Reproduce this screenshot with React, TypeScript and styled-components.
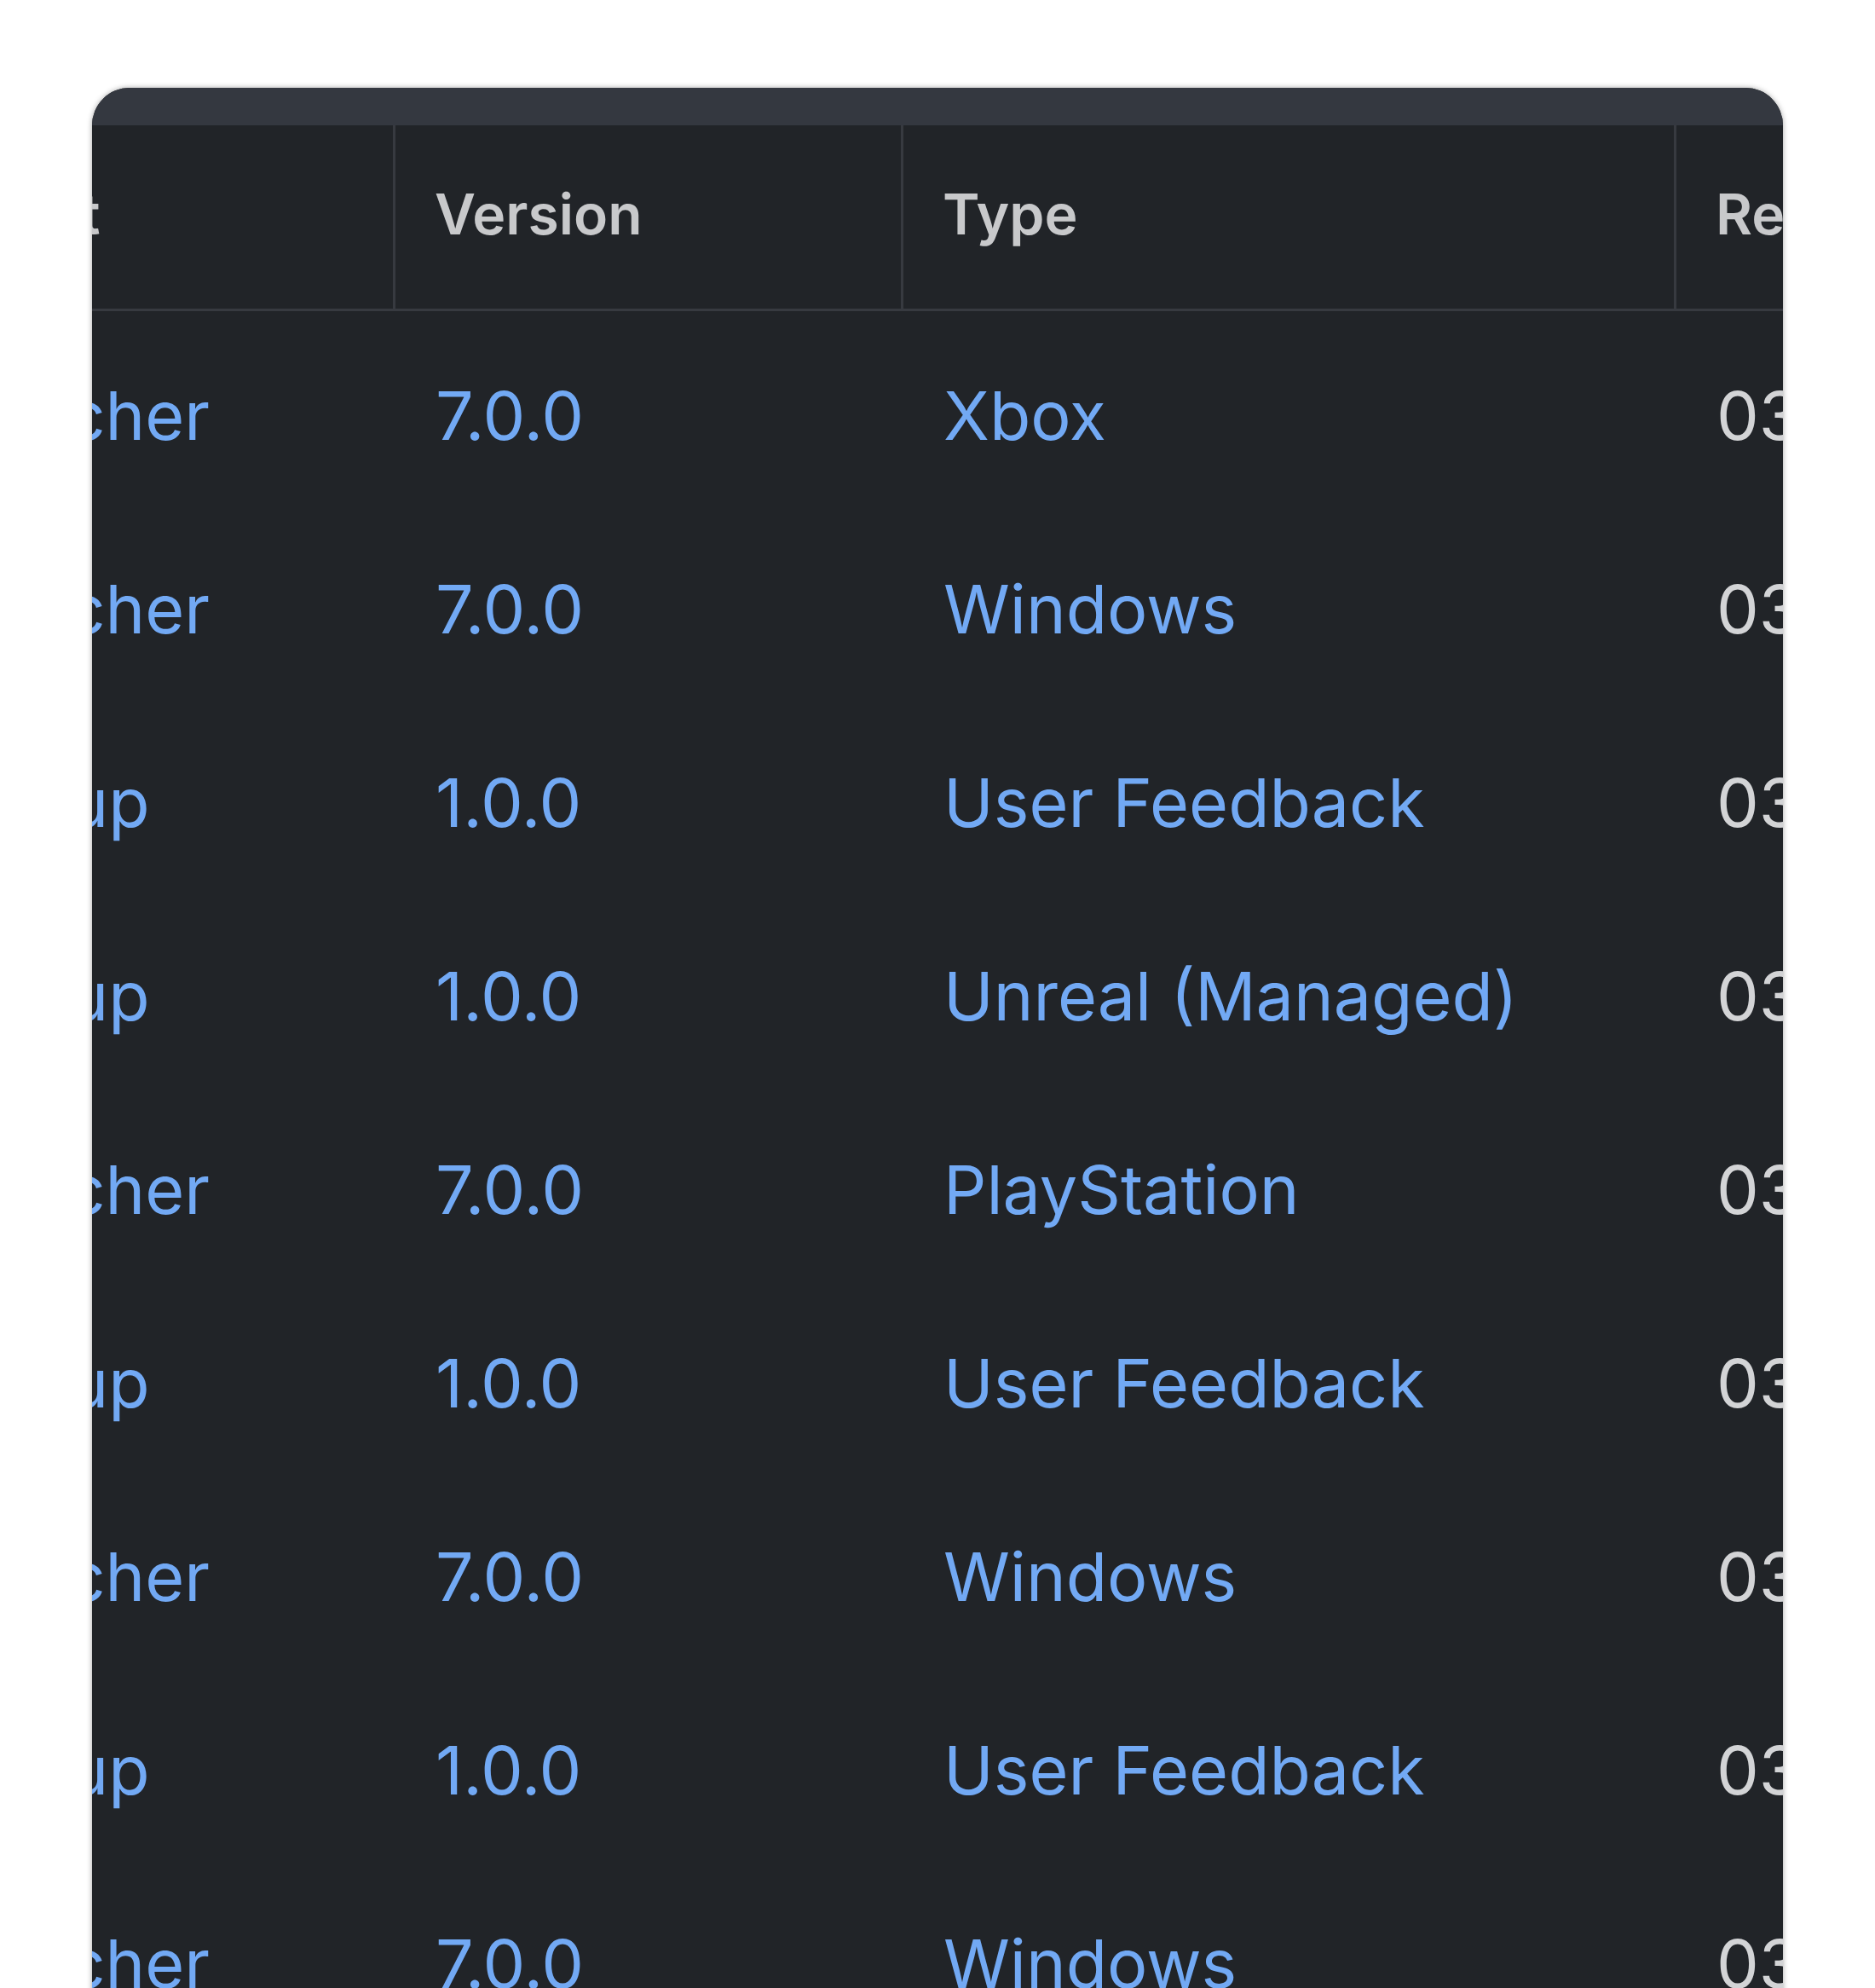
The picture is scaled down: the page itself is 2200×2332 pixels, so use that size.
import React from 'react'
import styled, { createGlobalStyle } from 'styled-components'

const GlobalStyle = createGlobalStyle`
  html, body { margin: 0; background: #ffffff; }
  body { font-family: Inter, "Noto Sans", sans-serif; overflow: hidden; }
`

const Page = styled.div`
  width: 2200px;
  height: 2332px;
  padding: 103px 108px 0 108px;
  box-sizing: border-box;
  overflow: hidden;
`

const Panel = styled.div`
  background: #212428;
  border-radius: 44px 44px 0 0;
  overflow: hidden;
  height: 2400px;
  box-shadow: 0 0 6px rgba(0, 0, 0, 0.35);
`

const TopStrip = styled.div`
  height: 44px;
  background: #343840;
`

const Table = styled.div`
  margin-left: -262px;
  display: grid;
  grid-template-columns: 615px 596px 907px 600px;
`

const HeadCell = styled.div<{ $divider?: boolean }>`
  height: 218px;
  padding-bottom: 8px;
  display: flex;
  align-items: center;
  padding-left: 46px;
  box-sizing: border-box;
  border-bottom: 3px solid #373a40;
  border-left: ${(p) => (p.$divider ? '3px solid #373a40' : 'none')};
  color: #c8c9cb;
  font-size: 66px;
  font-weight: 600;
  white-space: nowrap;
`

const Cell = styled.div<{ $plain?: boolean; $first?: boolean }>`
  height: 227px;
  margin-top: ${(p) => (p.$first ? '8px' : '0')};
  display: flex;
  align-items: center;
  padding-left: 50px;
  box-sizing: border-box;
  color: ${(p) => (p.$plain ? '#d3d4d6' : '#72a9f4')};
  font-size: 79px;
  white-space: nowrap;
`

const rows: [string, string, string][] = [
  ['Launcher', '7.0.0', 'Xbox'],
  ['Launcher', '7.0.0', 'Windows'],
  ['Backup', '1.0.0', 'User Feedback'],
  ['Backup', '1.0.0', 'Unreal (Managed)'],
  ['Launcher', '7.0.0', 'PlayStation'],
  ['Backup', '1.0.0', 'User Feedback'],
  ['Launcher', '7.0.0', 'Windows'],
  ['Backup', '1.0.0', 'User Feedback'],
  ['Launcher', '7.0.0', 'Windows'],
]

export default function App() {
  return (
    <Page>
      <GlobalStyle />
      <Panel>
        <TopStrip />
        <Table>
          <HeadCell>Project</HeadCell>
          <HeadCell $divider>Version</HeadCell>
          <HeadCell $divider>Type</HeadCell>
          <HeadCell $divider>Released</HeadCell>
          {rows.map((r, i) => (
            <React.Fragment key={i}>
              <Cell $first={i === 0}>{r[0]}</Cell>
              <Cell $first={i === 0}>{r[1]}</Cell>
              <Cell $first={i === 0}>{r[2]}</Cell>
              <Cell $first={i === 0} $plain>03/12/2024</Cell>
            </React.Fragment>
          ))}
        </Table>
      </Panel>
    </Page>
  )
}
